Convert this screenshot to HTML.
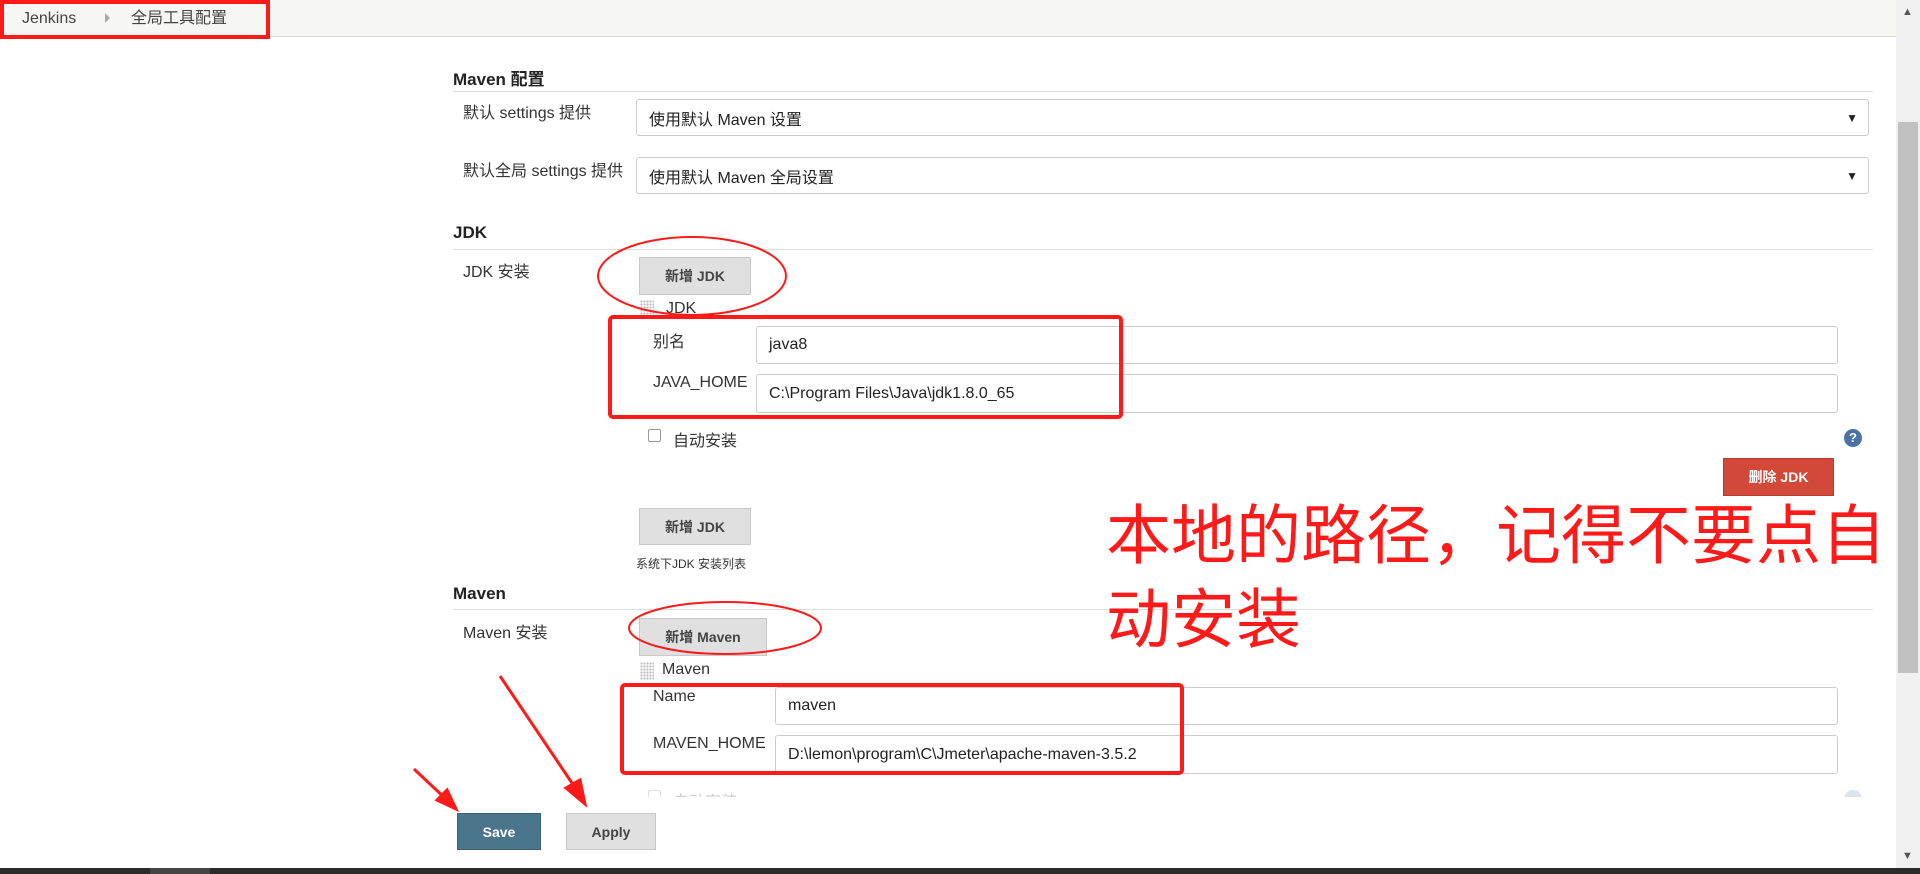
<!DOCTYPE html>
<html><head><meta charset="utf-8"><style>
*{margin:0;padding:0;box-sizing:border-box}
body{width:1920px;height:874px;overflow:hidden;background:#fff;position:relative;font-family:"Liberation Sans","Noto Sans CJK SC",sans-serif;font-size:16px;color:#333}
.a{position:absolute;white-space:nowrap}
.hdr{left:0;top:0;width:1896px;height:37px;background:#f6f7f2;border-bottom:1px solid #dcdcd6}
.h{font-weight:bold;font-size:17px;color:#222}
.line{height:1px;background:#ddd}
.inp{border:1px solid #ccc;border-radius:3px;background:#fff;padding-left:12px;display:flex;align-items:center;font-size:16px;color:#222}
.btn{background:#e0e0e0;border:1px solid #c8c8c8;font-weight:bold;font-size:14px;color:#444;display:flex;align-items:center;justify-content:center}
.grip{width:14px;height:18px;background-image:radial-gradient(#bbb 1px,transparent 1.2px);background-size:3px 3px}
</style></head><body>
<div class="a hdr"></div>
<div class="a" style="left:22px;top:0;height:37px;line-height:37px;font-size:16px;color:#444">Jenkins</div>
<div class="a" style="left:105px;top:13px;width:0;height:0;border-left:5px solid #aaa;border-top:5px solid transparent;border-bottom:5px solid transparent"></div>
<div class="a" style="left:131px;top:0;height:37px;line-height:37px;font-size:16px;color:#444">全局工具配置</div>

<div class="a h" style="left:453px;top:65px">Maven 配置</div>
<div class="a line" style="left:453px;top:91px;width:1420px"></div>
<div class="a" style="left:463px;top:99px">默认 settings 提供</div>
<div class="a inp" style="left:636px;top:99px;width:1233px;height:37px">使用默认 Maven 设置<span style="position:absolute;right:10px;font-size:12px">▼</span></div>
<div class="a" style="left:463px;top:157px">默认全局 settings 提供</div>
<div class="a inp" style="left:636px;top:157px;width:1233px;height:37px">使用默认 Maven 全局设置<span style="position:absolute;right:10px;font-size:12px">▼</span></div>

<div class="a h" style="left:453px;top:223px">JDK</div>
<div class="a line" style="left:453px;top:249px;width:1420px"></div>
<div class="a" style="left:463px;top:258px">JDK 安装</div>
<div class="a btn" style="left:639px;top:257px;width:112px;height:38px">新增 JDK</div>
<div class="a grip" style="left:640px;top:300px"></div>
<div class="a" style="left:666px;top:300px">JDK</div>
<div class="a" style="left:653px;top:328px">别名</div>
<div class="a inp" style="left:756px;top:326px;width:1082px;height:38px">java8</div>
<div class="a" style="left:653px;top:374px">JAVA_HOME</div>
<div class="a inp" style="left:756px;top:374px;width:1082px;height:39px">C:\Program Files\Java\jdk1.8.0_65</div>
<div class="a" style="left:648px;top:429px;width:13px;height:13px;border:1px solid #999;border-radius:2px;background:#fff"></div>
<div class="a" style="left:673px;top:427px">自动安装</div>
<div class="a" style="left:1844px;top:429px;width:18px;height:18px;border-radius:50%;background:#4a72a8;color:#fff;font-size:13px;font-weight:bold;text-align:center;line-height:18px">?</div>
<div class="a btn" style="left:1723px;top:458px;width:111px;height:38px;background:#d24939;border-color:#b83a2c;color:#fff">删除 JDK</div>
<div class="a btn" style="left:639px;top:508px;width:112px;height:37px">新增 JDK</div>
<div class="a" style="left:636px;top:555px;font-size:12px">系统下JDK 安装列表</div>

<div class="a h" style="left:453px;top:584px">Maven</div>
<div class="a line" style="left:453px;top:609px;width:1420px"></div>
<div class="a" style="left:463px;top:619px">Maven 安装</div>
<div class="a btn" style="left:639px;top:618px;width:128px;height:38px">新增 Maven</div>
<div class="a grip" style="left:640px;top:662px"></div>
<div class="a" style="left:662px;top:661px">Maven</div>
<div class="a" style="left:653px;top:688px">Name</div>
<div class="a inp" style="left:775px;top:687px;width:1063px;height:38px">maven</div>
<div class="a" style="left:653px;top:735px">MAVEN_HOME</div>
<div class="a inp" style="left:775px;top:735px;width:1063px;height:39px">D:\lemon\program\C\Jmeter\apache-maven-3.5.2</div>
<div class="a" style="left:648px;top:790px;width:13px;height:13px;border:1px solid #ddd;border-radius:2px"></div>
<div class="a" style="left:673px;top:788px;color:#ccc">自动安装</div>
<div class="a" style="left:1844px;top:790px;width:18px;height:18px;border-radius:50%;background:#dde3ec"></div>

<div class="a" style="left:0;top:797px;width:1896px;height:71px;background:#fff"></div>
<div class="a btn" style="left:457px;top:813px;width:84px;height:37px;background:#4b758b;border-color:#3d6275;color:#fff">Save</div>
<div class="a btn" style="left:566px;top:813px;width:90px;height:37px">Apply</div>
<div class="a" style="left:0;top:868px;width:1920px;height:6px;background:#2b2b2b"></div>
<div class="a" style="left:150px;top:868px;width:60px;height:6px;background:#444"></div>

<div class="a" style="left:1896px;top:0;width:24px;height:868px;background:#f0f0f0"></div>
<div class="a" style="left:1898px;top:122px;width:20px;height:551px;background:#c1c1c1"></div>
<div class="a" style="left:1902px;top:6px;font-size:11px;color:#555">▲</div>
<div class="a" style="left:1902px;top:850px;font-size:11px;color:#555">▼</div>

<div class="a" style="left:1106px;top:488px;font-size:65px;line-height:84px;color:#ff1a1a;font-family:'Noto Sans CJK SC',sans-serif;white-space:normal;width:790px">本地的路径，记得不要点自动安装</div>

<svg class="a" style="left:0;top:0" width="1920" height="874">
<g fill="none" stroke="#ff1a1a">
<rect x="2" y="2" width="266" height="35" stroke-width="4"/>
<rect x="610" y="317" width="511" height="100" rx="3" stroke-width="4"/>
<rect x="622" y="685" width="560" height="88" rx="3" stroke-width="4"/>
<ellipse cx="692" cy="276" rx="94" ry="39" stroke-width="2"/>
<ellipse cx="725" cy="628" rx="96" ry="26" stroke-width="2"/>
</g>
<g fill="#ff1a1a" stroke="#ff1a1a" stroke-width="3">
<line x1="500" y1="676" x2="578" y2="792"/>
<polygon points="585,804 566,788 580,780" />
<line x1="414" y1="769" x2="448" y2="801"/>
<polygon points="456,809 437,800 447,790"/>
</g>
</svg>
</body></html>
